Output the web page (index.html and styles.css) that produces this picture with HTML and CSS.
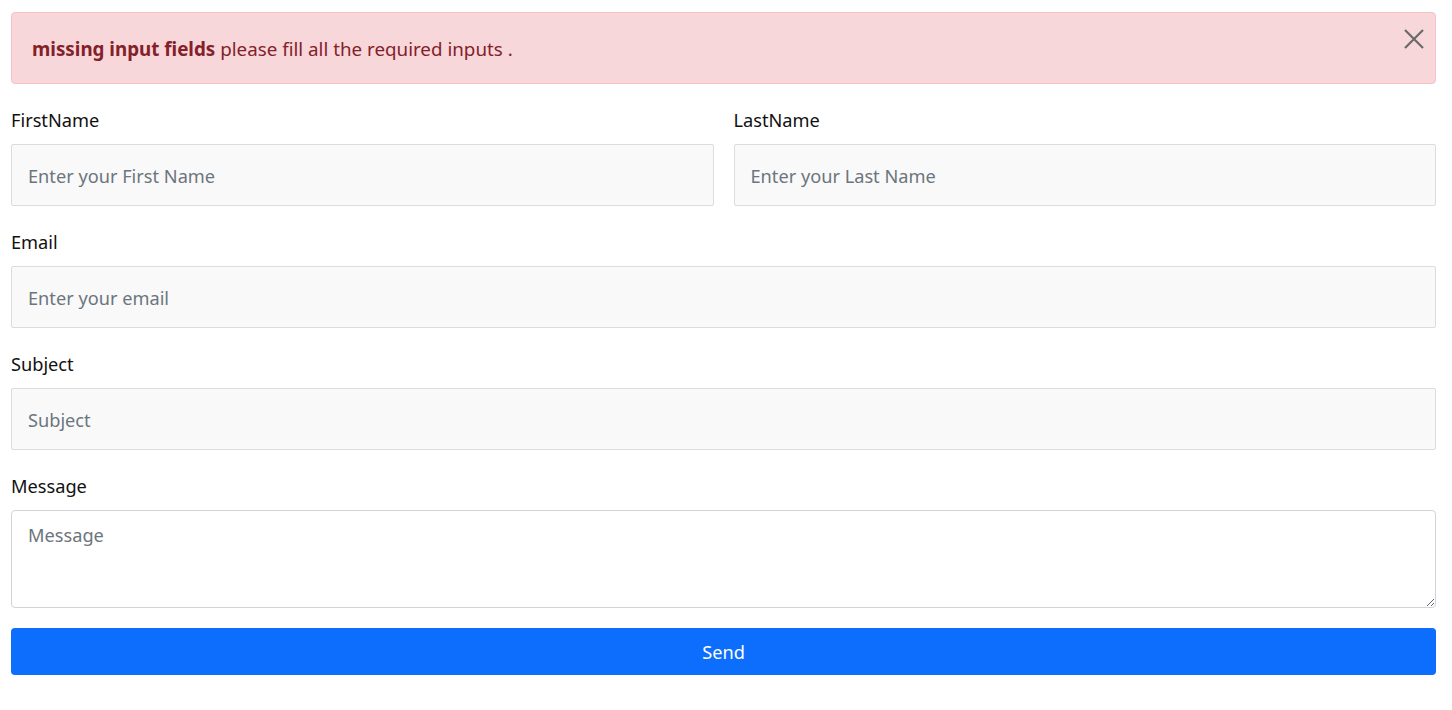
FILE: index.html
```html
<!DOCTYPE html>
<html>
<head>
<meta charset="utf-8">
<link rel="stylesheet" href="styles.css">
</head>
<body>
<div class="page">
  <div class="alert">
    <div class="alert-text"><strong>missing input fields</strong> please fill all the required inputs .</div>
    <button class="close" aria-label="Close">
      <svg width="22" height="22" viewBox="0 0 22 22"><path d="M2 2 L20 20 M20 2 L2 20" stroke="#6a6a6a" stroke-width="2.2" fill="none"/></svg>
    </button>
  </div>
  <form class="form">
    <div class="row">
      <div class="group">
        <label class="label">FirstName</label>
        <input class="input" type="text" placeholder="Enter your First Name">
      </div>
      <div class="group">
        <label class="label">LastName</label>
        <input class="input" type="text" placeholder="Enter your Last Name">
      </div>
    </div>
    <div class="group">
      <label class="label">Email</label>
      <input class="input" type="email" placeholder="Enter your email">
    </div>
    <div class="group">
      <label class="label">Subject</label>
      <input class="input" type="text" placeholder="Subject">
    </div>
    <div class="group">
      <label class="label">Message</label>
      <textarea class="textarea" placeholder="Message"></textarea>
    </div>
    <button class="send" type="button">Send</button>
  </form>
</div>
</body>
</html>
```
FILE: styles.css
```css
* { box-sizing: border-box; }
body {
  margin: 0;
  font-family: "Noto Sans", "Open Sans", sans-serif;
  color: #212529;
  background: #fff;
}
.page {
  padding: 12px 16px 0 11px;
}
.alert {
  display: flex;
  align-items: center;
  justify-content: space-between;
  height: 72px;
  padding: 1px 10px 0 20px;
  background: #f8d7da;
  border: 1px solid #f5c2c7;
  border-radius: 4px;
  color: #842029;
  font-size: 18.8px;
}
.alert-text strong { font-weight: 700; }
.close {
  align-self: flex-start;
  margin-top: 14px;
  background: none;
  border: 0;
  padding: 0;
  width: 22px;
  height: 22px;
  cursor: pointer;
}
.form {
  margin-top: 24px;
  display: flex;
  flex-direction: column;
}
.row {
  display: grid;
  grid-template-columns: 1fr 1fr;
  gap: 20px;
}
.group {
  display: flex;
  flex-direction: column;
  margin-bottom: 24px;
}
.label {
  font-size: 18.2px;
  line-height: 24px;
  margin-bottom: 12px;
  color: #111;
}
.input {
  height: 62px;
  padding: 1px 16px 0;
  font-family: inherit;
  font-size: 18.2px;
  background: #f9f9f9;
  border: 1px solid #dcdcdc;
  border-radius: 2px;
  color: #212529;
}
.input::placeholder, .textarea::placeholder { color: #6c757d; }
.textarea {
  height: 98px;
  padding: 12px 16px;
  font-family: inherit;
  font-size: 18.2px;
  background: #fff;
  border: 1px solid #ced4da;
  border-radius: 4px;
  resize: vertical;
  margin-bottom: -4px;
}
.send {
  height: 47px;
  padding-top: 2px;
  background: #0d6efd;
  border: 0;
  border-radius: 4px;
  color: #fff;
  font-family: inherit;
  font-size: 18.2px;
}
```
